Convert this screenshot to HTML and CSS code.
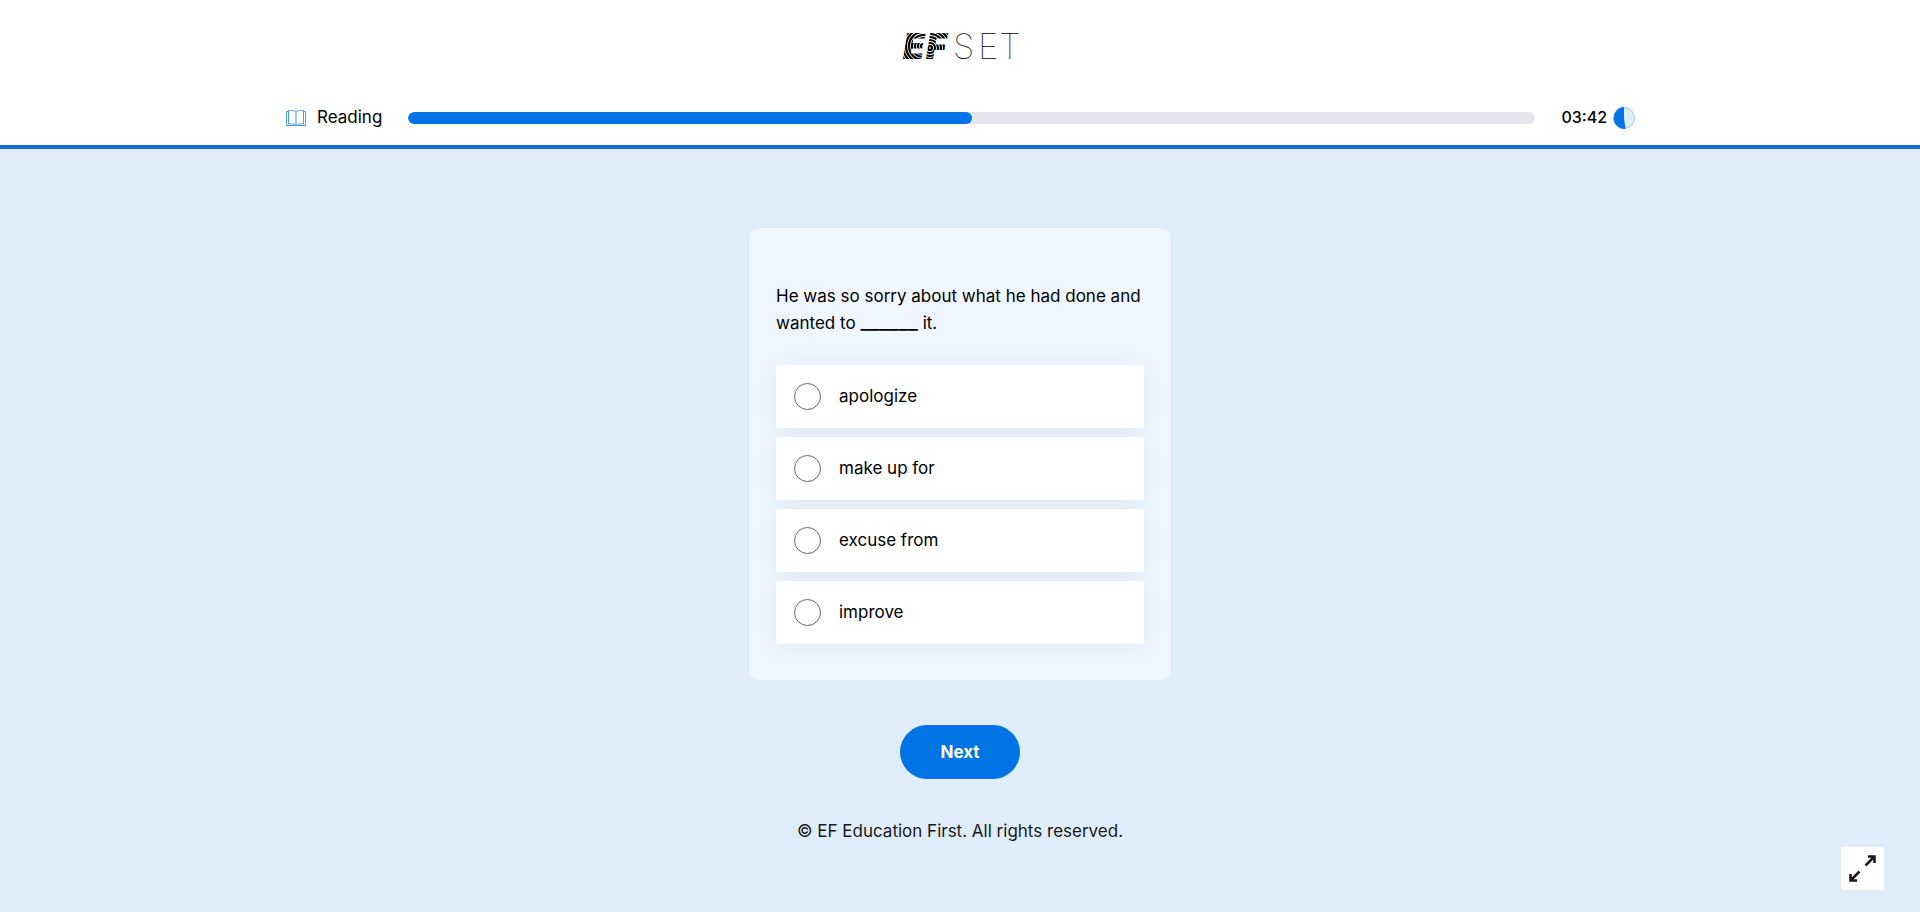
FILE: index.html
```html
<!DOCTYPE html>
<html lang="en">
<head>
  <meta charset="utf-8">
  <title>EF SET</title>
  <link rel="stylesheet" href="styles.css">
</head>
<body>
  <header class="header">
    <a class="logo" href="#" aria-label="EF SET">
      <svg width="122" height="46" viewBox="-4 -9 122 46">
        <defs>
          <!-- striped rings that fill the two bold letters -->
          <pattern id="ringsE" patternUnits="userSpaceOnUse" x="-4" y="-9" width="34" height="46">
            <g fill="none" stroke="#000" stroke-width="2.2">
              <circle cx="24" cy="23" r="2"/>
              <circle cx="24" cy="23" r="5"/>
              <circle cx="24" cy="23" r="8"/>
              <circle cx="24" cy="23" r="11"/>
              <circle cx="24" cy="23" r="14"/>
              <circle cx="24" cy="23" r="17"/>
              <circle cx="24" cy="23" r="20"/>
              <circle cx="24" cy="23" r="23"/>
              <circle cx="24" cy="23" r="26"/>
            </g>
          </pattern>
          <pattern id="ringsF" patternUnits="userSpaceOnUse" x="20" y="-9" width="34" height="46">
            <g fill="none" stroke="#000" stroke-width="2.2">
              <circle cx="7" cy="25" r="2"/>
              <circle cx="7" cy="25" r="5"/>
              <circle cx="7" cy="25" r="8"/>
              <circle cx="7" cy="25" r="11"/>
              <circle cx="7" cy="25" r="14"/>
              <circle cx="7" cy="25" r="17"/>
              <circle cx="7" cy="25" r="20"/>
              <circle cx="7" cy="25" r="23"/>
              <circle cx="7" cy="25" r="26"/>
            </g>
          </pattern>
        </defs>
        <text class="logo-bold" x="0" y="27" fill="url(#ringsE)">E</text>
        <text class="logo-bold" x="23" y="27" fill="url(#ringsF)">F</text>
        <text class="logo-thin" x="50 75 96" y="27">SET</text>
      </svg>
    </a>

    <div class="status">
      <div class="section-name">
        <svg width="22" height="18" viewBox="0 0 22 18" fill="none" stroke="#4a9be8">
          <path d="M11 3C9 1.500 6 1 3.500 1.500V15C6 14.500 9 15 11 16.500C13 15 16 14.500 18.500 15V1.500C16 1 13 1.500 11 3V16.500"/>
          <path d="M3.500 2.500H1.500V16.500H9.500L11 17L12.500 16.500H20.500V2.500H18.500"/>
        </svg>
        <span>Reading</span>
      </div>
      <div class="progress" role="progressbar" aria-label="Reading" aria-valuenow="50" aria-valuemin="0" aria-valuemax="100">
        <div class="progress-fill" style="width: 50%"></div>
      </div>
      <div class="timer">
        <span>03:42</span>
        <svg width="22" height="22" viewBox="0 0 22 22">
          <circle cx="11" cy="11" r="10.500" fill="#dfedfb" stroke="#9cc8f2"/>
          <path d="M11 0A11 11 0 0 0 12.500 22L11 11Z" fill="#0074e4"/>
        </svg>
      </div>
    </div>
  </header>

  <main class="content">
    <form class="question-form">
      <fieldset class="card">
        <legend class="question">He was so sorry about what he had done and wanted to <span class="blank">______</span> it.</legend>
        <div class="options">
          <label class="option"><input type="radio" name="answer" value="1">apologize</label>
          <label class="option"><input type="radio" name="answer" value="2">make up for</label>
          <label class="option"><input type="radio" name="answer" value="3">excuse from</label>
          <label class="option"><input type="radio" name="answer" value="4">improve</label>
        </div>
      </fieldset>
      <button class="next" type="button">Next</button>
    </form>
    <footer class="footer">© EF Education First. All rights reserved.</footer>
  </main>

  <button class="fullscreen" type="button" aria-label="Full screen">
    <svg width="29" height="29" viewBox="0 0 29 29" fill="none" stroke="#191919" stroke-width="2.500">
      <path d="M17.500 11.500L26 3M20 2.500H26.500V9"/>
      <path d="M11.500 17.500L3 26M2.500 20V26.500H9"/>
    </svg>
  </button>
</body>
</html>
```

FILE: styles.css
```css
:root {
  --blue: #0074e4;
  --pale-blue: #dfedfb;
}

* {
  box-sizing: border-box;
}

body {
  display: flex;
  flex-direction: column;
  min-height: 100vh;
  margin: 0;
  font-family: Inter, "Liberation Sans", sans-serif;
  font-size: 17px;
  line-height: 27px;
  color: #000;
  background: var(--pale-blue);
}

.header {
  display: flex;
  flex-direction: column;
  align-items: center;
  gap: 35px;
  padding: 23px 32px 14px;
  background: #fff;
  border-bottom: 4px solid #0f70d1;
}

.logo {
  display: flex;
  color: #000;
}

.logo-bold {
  font-family: Inter, sans-serif;
  font-size: 35px;
  font-weight: 900;
  font-style: italic;
}

.logo-thin {
  font-family: Inter, sans-serif;
  font-size: 35px;
  font-weight: 100;
}

.status {
  display: flex;
  align-items: center;
  gap: 26px;
  width: 100%;
  max-width: 1350px;
}

.section-name {
  display: flex;
  align-items: center;
  gap: 10px;
}

.progress {
  flex: 1;
  height: 12px;
  border-radius: 6px;
  background: #e5e6eb;
  overflow: hidden;
}

.progress-fill {
  height: 100%;
  border-radius: 6px;
  background: var(--blue);
}

.timer {
  display: flex;
  align-items: center;
  gap: 6px;
  font-size: 16px;
  font-weight: 500;
}

.content {
  display: flex;
  flex: 1;
  flex-direction: column;
  align-items: center;
  gap: 39px;
  padding: 79px 16px 32px;
}

.question-form {
  display: flex;
  flex-direction: column;
  align-items: center;
  gap: 45px;
  width: 100%;
  max-width: 422px;
}

.card {
  width: 100%;
  margin: 0;
  padding: 55px 27px 36px;
  border: 0;
  border-radius: 9px;
  background: #eff6fd;
}

.question {
  float: left;
  width: 100%;
  margin-bottom: 28px;
  padding: 0;
}

.blank {
  font-size: 21px;
  line-height: 1;
}

.options {
  display: flex;
  flex-direction: column;
  gap: 9px;
  clear: both;
}

.option {
  display: flex;
  align-items: center;
  gap: 18px;
  padding: 18px;
  border-radius: 3px;
  background: #fff;
  box-shadow: 0 2px 27px rgba(25, 25, 0, 0.06);
  cursor: pointer;
}

.option input {
  appearance: none;
  width: 27px;
  height: 27px;
  margin: 0;
  border: 1px solid #666;
  border-radius: 50%;
}

.option input:checked {
  border: 8px solid var(--blue);
}

.next {
  width: 120px;
  height: 54px;
  border: 0;
  border-radius: 27px;
  background: var(--blue);
  color: #fff;
  font: inherit;
  font-weight: 700;
  cursor: pointer;
}

.footer {
  color: #191919;
}

.fullscreen {
  position: fixed;
  right: 36px;
  bottom: 22px;
  display: flex;
  padding: 7px;
  border: 0;
  border-radius: 3px;
  background: #fff;
  cursor: pointer;
}
```
